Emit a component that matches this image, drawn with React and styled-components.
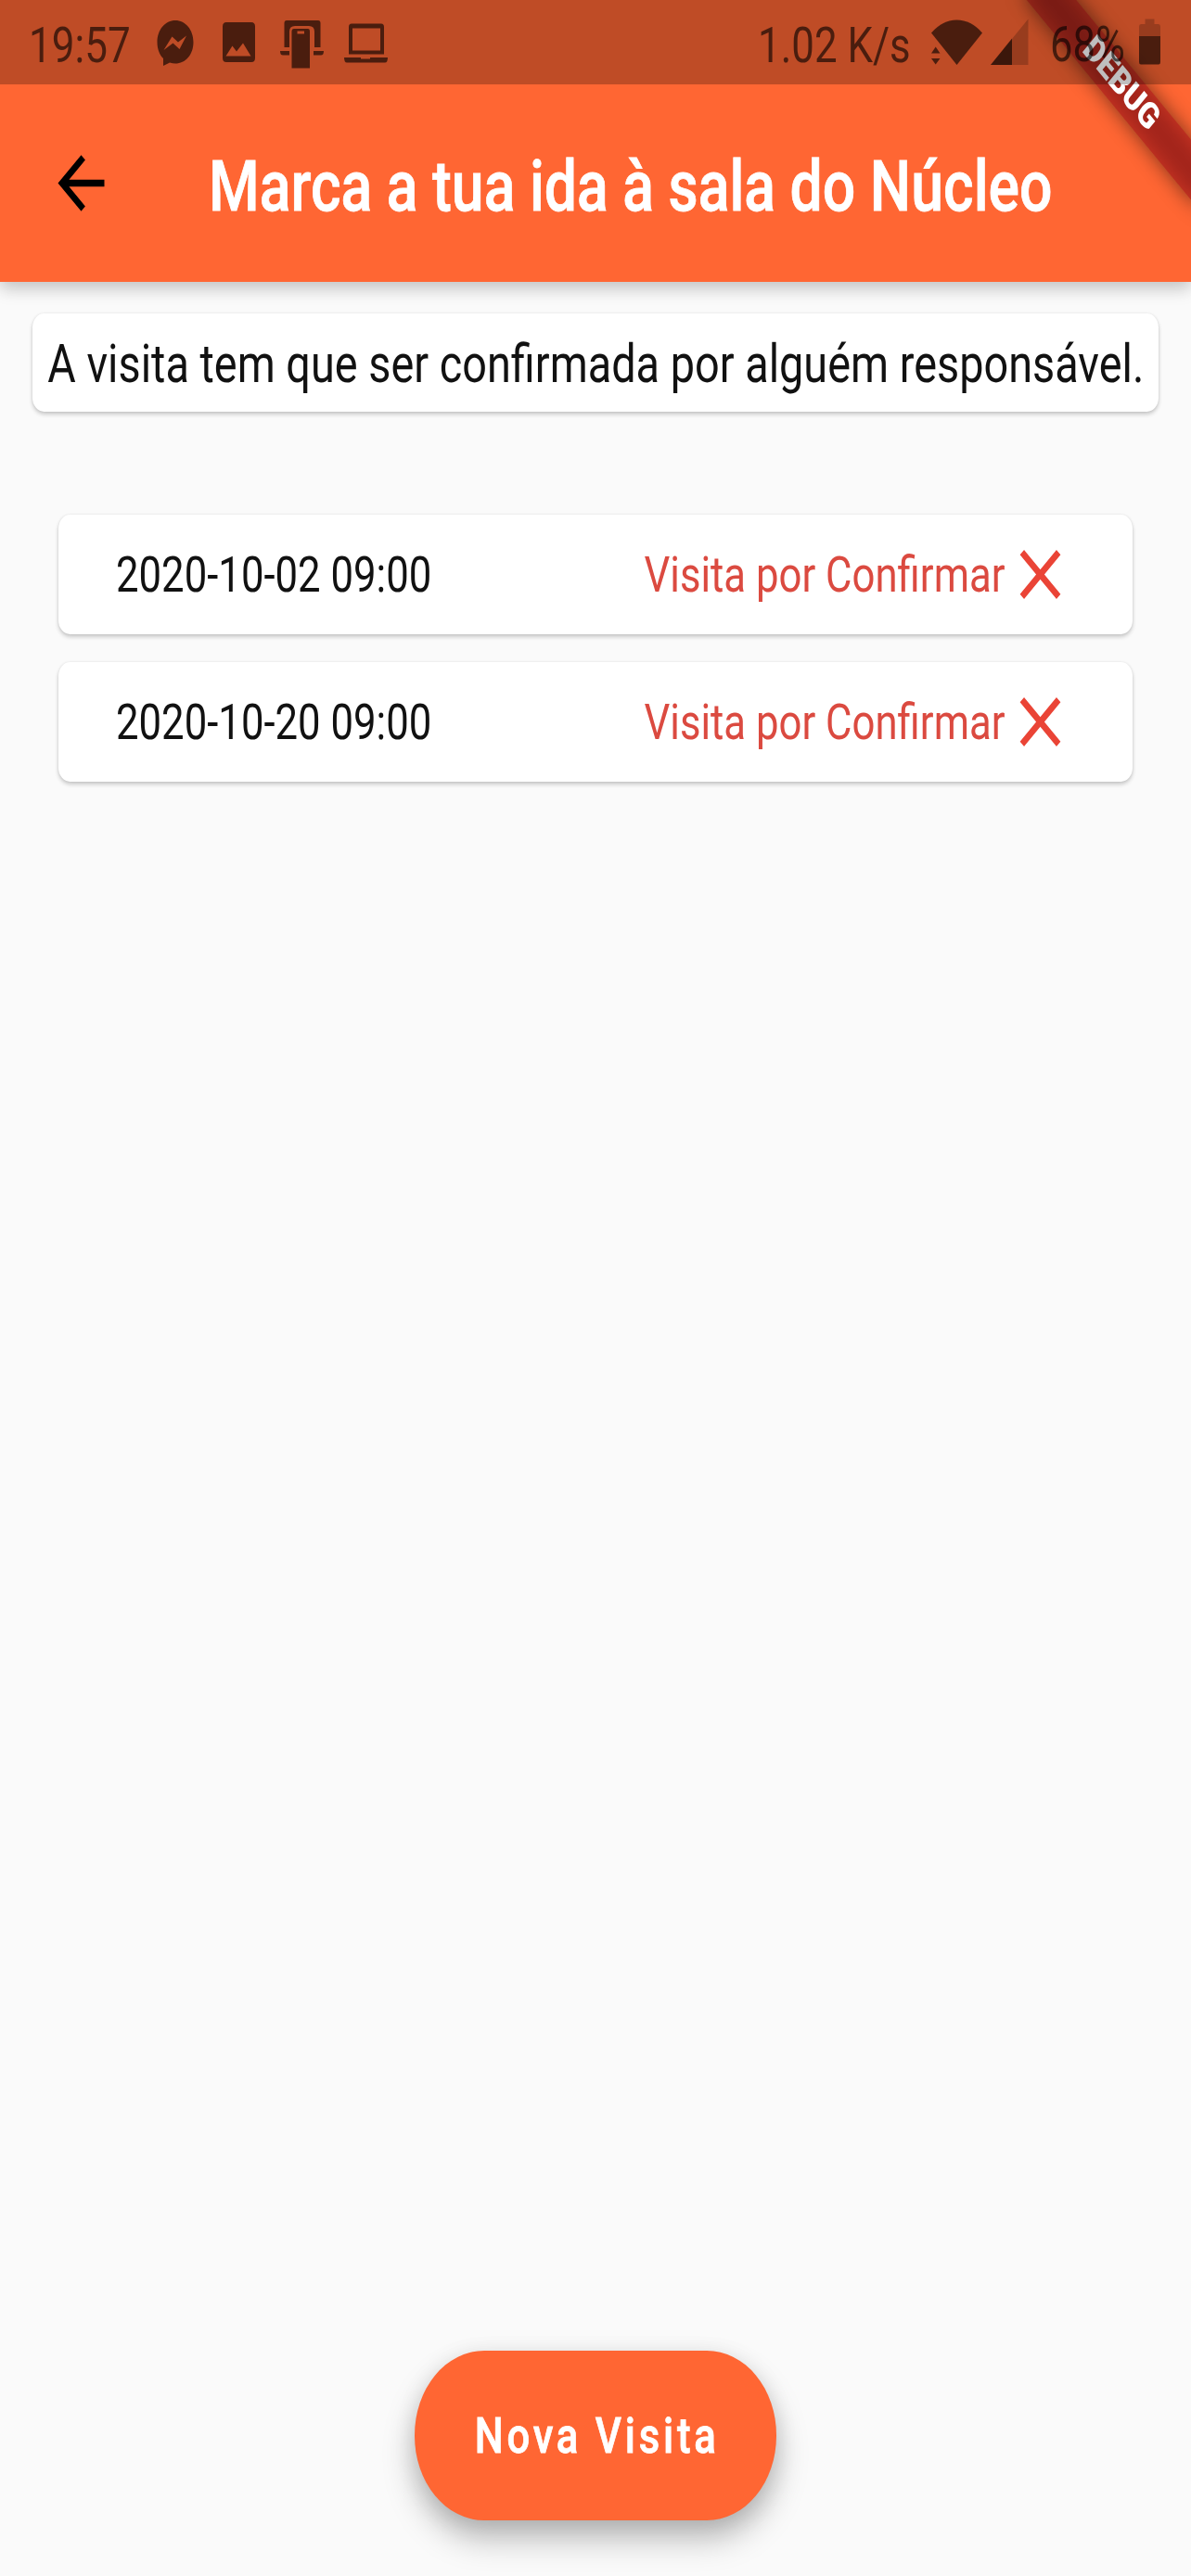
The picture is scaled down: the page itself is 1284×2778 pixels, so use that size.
import React from "react";
import styled, { createGlobalStyle } from "styled-components";

const ORANGE = "#ff6633";
const INK = "rgba(0, 0, 0, 0.61)";
const FAINT = "rgba(0, 0, 0, 0.2)";
const SQUEEZE = 0.8217;

const GlobalStyle = createGlobalStyle`
  html, body { margin: 0; padding: 0; background: #fafafa; }
  * { box-sizing: border-box; }
`;

const Screen = styled.div`
  position: relative;
  display: flex;
  flex-direction: column;
  width: 1284px;
  height: 2778px;
  overflow: hidden;
  background: #fafafa;
  font-family: Roboto, "Liberation Sans", sans-serif;
  color: #111;
`;

const Label = styled.span`
  display: block;
  flex: none;
  white-space: nowrap;
  line-height: 1.2;
  font-size: ${(p) => p.$size}px;
  font-weight: ${(p) => p.$weight || 400};
  color: ${(p) => p.$color || "inherit"};
  letter-spacing: ${(p) => p.$spacing || 0}px;
  transform: translateY(1.5px) scaleX(${SQUEEZE});
  transform-origin: ${(p) => p.$origin || "left"} center;
`;

const StrongLabel = styled(Label)`
  -webkit-text-stroke: 0.8px currentColor;
`;

const Header = styled.header`
  display: flex;
  flex-direction: column;
  flex: none;
  height: 304px;
  background: ${ORANGE};
  box-shadow: 0 8px 17px rgba(0, 0, 0, 0.16), 0 3px 18px rgba(0, 0, 0, 0.09);
`;

const StatusBar = styled.div`
  position: relative;
  z-index: 2;
  display: flex;
  justify-content: space-between;
  flex: none;
  height: 91px;
  padding: 0 33px 0 31px;
  background: rgba(0, 0, 0, 0.25);
`;

const StatusGroup = styled.div`
  display: flex;
  align-items: flex-start;
`;

const StatusSlot = styled.div`
  flex: none;
  width: ${(p) => p.$width}px;
  padding: 15px 0 0 ${(p) => p.$inset || 0}px;
`;

const StatusIcon = styled.svg`
  display: block;
  flex: none;
  width: ${(p) => p.$width}px;
  height: 91px;
  margin-left: ${(p) => p.$gap}px;
`;

const AppBar = styled.div`
  display: flex;
  align-items: center;
  flex: 1;
  padding-left: 50px;
`;

const BackButton = styled.button`
  display: flex;
  flex: none;
  width: 175px;
  padding: 0;
  border: 0;
  background: none;
`;

const Glyph = styled.svg`
  display: block;
  flex: none;
  width: 75px;
  height: 91px;
`;

const TitleBox = styled.div`
  min-width: 0;
  padding-top: 4px;
`;

const RibbonCorner = styled.div`
  position: absolute;
  z-index: 1;
  top: 0;
  right: 0;
  width: 400px;
  height: 400px;
  overflow: hidden;
  pointer-events: none;
  transform: scaleX(${SQUEEZE});
  transform-origin: right top;
`;

const Band = styled.div`
  position: absolute;
  top: 68.5px;
  right: -68.7px;
  width: 320px;
  height: 45.6px;
  transform: rotate(45deg);
`;

const BandShadow = styled(Band)`
  background: rgba(0, 0, 0, 0.5);
  filter: blur(11.4px);
`;

const BandFace = styled(Band)`
  display: flex;
  align-items: center;
  justify-content: center;
  padding: 0 3px 2px 0;
  background: rgba(183, 28, 28, 0.63);
  color: #fff;
  font-size: 38.8px;
  font-weight: 900;
  line-height: 1;
`;

const Content = styled.main`
  display: flex;
  flex-direction: column;
  flex: 1;
  padding: 34px 35px 0;
`;

const Card = styled.div`
  display: flex;
  align-items: center;
  background: #fff;
  border-radius: 12.5px / 15px;
  box-shadow: 0 3px 4px rgba(0, 0, 0, 0.19), 0 0 3px rgba(0, 0, 0, 0.09);
`;

const NoticeCard = styled(Card)`
  justify-content: center;
  height: 106px;
`;

const VisitList = styled.div`
  display: flex;
  flex-direction: column;
  gap: 30.5px;
  padding: 111px 28px 0;
`;

const VisitCard = styled(Card)`
  justify-content: space-between;
  height: 128.5px;
  padding: 0 62px;
`;

const VisitStatus = styled.div`
  display: flex;
  align-items: center;
`;

const Footer = styled.footer`
  display: flex;
  justify-content: center;
  flex: none;
  padding-bottom: 60.5px;
`;

const NewVisitButton = styled.button`
  display: flex;
  align-items: center;
  justify-content: center;
  width: 390px;
  height: 182.5px;
  padding: 0 0 0 3px;
  border: 0;
  border-radius: 75px / 91px;
  background: ${ORANGE};
  color: #fff;
  font-family: inherit;
  box-shadow: 0 20px 34px rgba(0, 0, 0, 0.25), 0 5px 24px rgba(0, 0, 0, 0.1);
`;

const visits = ["2020-10-02 09:00", "2020-10-20 09:00"];

function NotificationIcons() {
  return (
    <>
      <StatusIcon $width={40} $gap={30} viewBox="0 0 40 91" fill={INK}>
        <path
          fillRule="evenodd"
          d="M20 22C9 22 .5 32 .5 45.5c0 7.5 2.500 13.500 6.500 17.500V71l7-3.500c2 .7 4 1 6 1C31 68.500 39.500 59 39.500 45.500S31 22 20 22ZM7.500 54 16.500 39.500l6.500 6L32 38.500 24.500 53l-7-6.500Z"
        />
      </StatusIcon>
      <StatusIcon $width={35} $gap={31} viewBox="0 0 35 91" fill={INK}>
        <path
          fillRule="evenodd"
          d="M4 24h27q4 0 4 4.500v34q0 4.500-4 4.500H4q-4 0-4-4.500v-34Q0 24 4 24ZM3.500 60.500h27L22 46.500l-7 9-4.500-6Z"
        />
      </StatusIcon>
      <StatusIcon $width={47} $gap={27} viewBox="0 0 47 91" fill={INK}>
        <path d="M7 22h34q2.500 0 2.500 3v26H37V34q0-6-6-6H16q-6 0-6 6v17H4.500V25q0-3 2.500-3Z" />
        <path d="M0 55h10v4.500H3Q0 59.500 0 55ZM36 55h11q0 4.500-3 4.500h-8Z" />
        <path
          fillRule="evenodd"
          d="M15 31h15q2 0 2 3v39.500H12.500V34q0-3 2.500-3ZM18.500 33.500v3h7.500v-3Z"
        />
      </StatusIcon>
      <StatusIcon $width={47} $gap={22} viewBox="0 0 47 91" fill={INK}>
        <path
          fillRule="evenodd"
          d="M8 25.500h32q3 0 3 3.500v29.500H5V29q0-3.500 3-3.500ZM9 30.500v24h30v-24Z"
        />
        <path d="M0 62h18v1.500h10V62h19q0 5.500-3 5.500H3Q0 67.500 0 62Z" />
      </StatusIcon>
    </>
  );
}

function Status() {
  return (
    <StatusBar>
      <StatusGroup>
        <StatusSlot $width={108}>
          <Label $size={53.6} $color={INK}>19:57</Label>
        </StatusSlot>
        <NotificationIcons />
      </StatusGroup>
      <StatusGroup>
        <StatusSlot $width={169}>
          <Label $size={53.4} $color={INK}>1.02 K/s</Label>
        </StatusSlot>
        <StatusIcon $width={56} $gap={18} viewBox="0 0 56 91" fill={INK}>
          <path d="M0 35.500Q12 21.500 27.500 21.500T55 35.500L27.500 70Z" />
          <path d="M0 57.500 4.700 50.500 9.500 57.500ZM0 63H9.500L4.700 69.500Z" />
        </StatusIcon>
        <StatusIcon $width={41} $gap={8} viewBox="0 0 41 91">
          <path d="M0 70 40.500 20.500V70Z" fill={FAINT} />
          <path d="M0 70 23 41.500V70Z" fill={INK} />
        </StatusIcon>
        <StatusSlot $width={109} $inset={23}>
          <Label $size={53} $color={INK}>68%</Label>
        </StatusSlot>
        <StatusIcon $width={23} $gap={10} viewBox="0 0 23 91">
          <path d="M6.500 20.500h10V26H21q2 0 2 2.500V39H0V28.500Q0 26 2 26h4.500Z" fill={FAINT} />
          <path d="M0 39h23v28q0 2.500-2 2.500H2Q0 69.500 0 67Z" fill={INK} />
        </StatusIcon>
      </StatusGroup>
    </StatusBar>
  );
}

function Visit({ date }) {
  return (
    <VisitCard>
      <Label $size={53.2}>{date}</Label>
      <VisitStatus>
        <Label $size={53.2} $color="#db4a40" $origin="right">Visita por Confirmar</Label>
        <Glyph viewBox="0 0 24 24" preserveAspectRatio="none" fill="#ea4436">
          <path d="M19 6.410 17.590 5 12 10.590 6.410 5 5 6.410 10.590 12 5 17.590 6.410 19 12 13.410 17.590 19 19 17.590 13.410 12Z" />
        </Glyph>
      </VisitStatus>
    </VisitCard>
  );
}

export default function App() {
  return (
    <Screen>
      <GlobalStyle />
      <Header>
        <Status />
        <AppBar>
          <BackButton aria-label="Voltar">
            <Glyph viewBox="0 0 24 24" preserveAspectRatio="none" fill="#000">
              <path d="M20 11H7.830l5.590-5.590L12 4l-8 8 8 8 1.410-1.410L7.830 13H20v-2Z" />
            </Glyph>
          </BackButton>
          <TitleBox>
            <StrongLabel $size={76.1} $weight={500} $color="#fff">Marca a tua ida à sala do Núcleo</StrongLabel>
          </TitleBox>
        </AppBar>
      </Header>
      <RibbonCorner>
        <BandShadow />
        <BandFace>DEBUG</BandFace>
      </RibbonCorner>
      <Content>
        <NoticeCard>
          <Label $size={57} $origin="center">A visita tem que ser confirmada por alguém responsável.</Label>
        </NoticeCard>
        <VisitList>
          {visits.map((date) => (
            <Visit key={date} date={date} />
          ))}
        </VisitList>
      </Content>
      <Footer>
        <NewVisitButton>
          <StrongLabel $size={53.2} $weight={500} $spacing={4.6} $origin="center">Nova Visita</StrongLabel>
        </NewVisitButton>
      </Footer>
    </Screen>
  );
}
